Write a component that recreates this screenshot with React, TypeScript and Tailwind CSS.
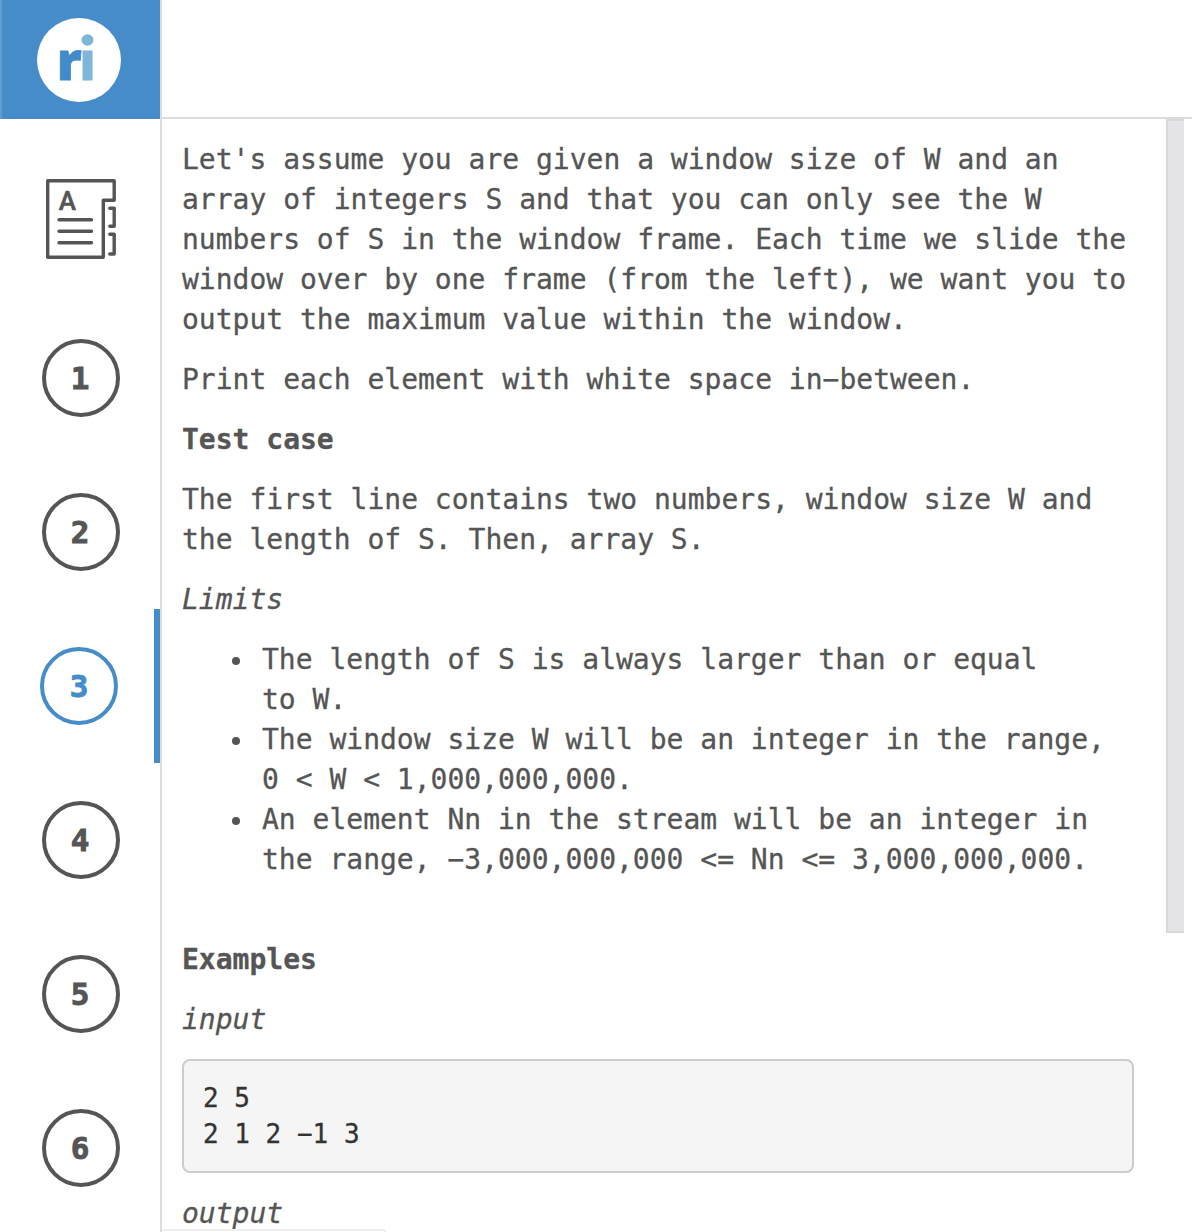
import React from "react";

const steps = [1, 2, 3, 4, 5, 6];

function Logo() {
  return (
    <svg width="84" height="84" viewBox="0 0 84 84" aria-label="ri">
      <circle cx="42" cy="42" r="42" fill="#fff" />
      <text x="19.8" y="62" fontFamily="Open Sans" fontWeight="800" fontSize="53" fill="#428bca" stroke="#428bca" strokeWidth="0.8" textLength="25" lengthAdjust="spacingAndGlyphs">r</text>
      <text x="42.8" y="62" fontFamily="Open Sans" fontWeight="800" fontSize="53" fill="#80b5da" stroke="#80b5da" strokeWidth="0.8" textLength="15.6" lengthAdjust="spacingAndGlyphs">ı</text>
      <ellipse cx="50.5" cy="22" rx="6" ry="5.7" fill="#80b5da" />
    </svg>
  );
}

function NotebookIcon() {
  return (
    <svg width="70" height="80" viewBox="0 0 70 80" fill="none" stroke="#555" strokeWidth="3.4" strokeLinecap="round" strokeLinejoin="round">
      <path d="M1.7 1.7H68.2V21.2H57.3V78.2H1.7Z" />
      <path d="M63.8 29.3H68.2V47.3H63.8M63.8 55.3H68.2V75H63.8" />
      <path d="M13 40.8H45.5M13 52.2H45.5M13 63.7H45.5" />
      <text x="12.8" y="30.8" fontFamily="Roboto" fontWeight="500" fontSize="26" fill="#555" stroke="#555" strokeWidth="0.6">A</text>
    </svg>
  );
}

function Step({ n }: { n: number }) {
  const active = n === 3;
  return (
    <div className={active ? "flex h-[154px] w-[160px] items-center border-r-[6px] border-[#468cc8] pl-10" : "flex h-[154px] w-[160px] items-center pl-[42px]"}>
      <div className={active ? "flex size-[78px] items-center justify-center rounded-full border-4 border-[#468cc8] text-[#468cc8]" : "flex size-[78px] items-center justify-center rounded-full border-4 border-[#555] text-[#555]"}>
        <span className={active ? "font-['DejaVu_Sans_Mono'] text-[31px] font-bold leading-none [-webkit-text-stroke:0.9px]" : "-ml-0.5 font-['DejaVu_Sans_Mono'] text-[31px] font-bold leading-none [-webkit-text-stroke:0.9px]"}>{n}</span>
      </div>
    </div>
  );
}

function Item({ children }: { children: React.ReactNode }) {
  return (
    <li className="flex">
      <span className="mt-[17px] mr-[22px] size-2 shrink-0 rounded-full bg-[#555]" />
      <span>{children}</span>
    </li>
  );
}

export default function App() {
  return (
    <div className="flex h-[1232px] w-[1192px] overflow-hidden bg-white">
      <aside className="flex h-full w-[160px] shrink-0 flex-col">
        <div className="h-[119px] shrink-0 border-l-2 border-[#5f9dd3] bg-[#468cc8] pl-[35px] pt-[18px]">
          <Logo />
        </div>
        <div className="h-[182px] shrink-0 pl-[46px] pt-[60px]">
          <NotebookIcon />
        </div>
        {steps.map((n) => <Step key={n} n={n} />)}
      </aside>
      <div className="flex h-full min-w-0 flex-1 flex-col border-l-2 border-[#dcdcdc]">
        <header className="h-[119px] shrink-0 border-b-2 border-[#dcdcdc]" />
        <div className="flex min-h-0 flex-1 justify-between pr-2">
          <main className="w-[972px] pl-5 pt-[21px] font-['DejaVu_Sans_Mono',monospace] text-[28px] leading-[40px] whitespace-nowrap text-[#555] [-webkit-text-stroke:0.3px]">
            <p className="mb-5">
              Let's assume you are given a window size of W and an<br />
              array of integers S and that you can only see the W<br />
              numbers of S in the window frame. Each time we slide the<br />
              window over by one frame (from the left), we want you to<br />
              output the maximum value within the window.
            </p>
            <p className="mb-5">Print each element with white space in−between.</p>
            <p className="mb-5 font-bold">Test case</p>
            <p className="mb-5">
              The first line contains two numbers, window size W and<br />
              the length of S. Then, array S.
            </p>
            <p className="mb-5 italic">Limits</p>
            <ul className="mb-[60px] pl-[50px]">
              <Item>The length of S is always larger than or equal<br />to W.</Item>
              <Item>The window size W will be an integer in the range,<br />0 &lt; W &lt; 1,000,000,000.</Item>
              <Item>An element Nn in the stream will be an integer in<br />the range, −3,000,000,000 &lt;= Nn &lt;= 3,000,000,000.</Item>
            </ul>
            <p className="mb-5 font-bold">Examples</p>
            <p className="mb-[19px] italic">input</p>
            <pre className="mb-[21px] h-[114px] w-[952px] rounded-lg border-2 border-[#ccc] bg-[#f5f5f5] px-[19px] py-[19px] font-['DejaVu_Sans_Mono',monospace] text-[26px] leading-[36px] text-[#333]">{"2 5\n2 1 2 −1 3"}</pre>
            <p className="italic">output</p>
          </main>
          <div className="h-[814px] w-[18px] border-b-2 border-l-2 border-t-2 border-[#d8d8d8] bg-[#e4e4e6]" />
        </div>
        <div className="h-[3px] w-[224px] shrink-0 rounded-tr border-r-2 border-t-2 border-[#eee] bg-white" />
      </div>
    </div>
  );
}
